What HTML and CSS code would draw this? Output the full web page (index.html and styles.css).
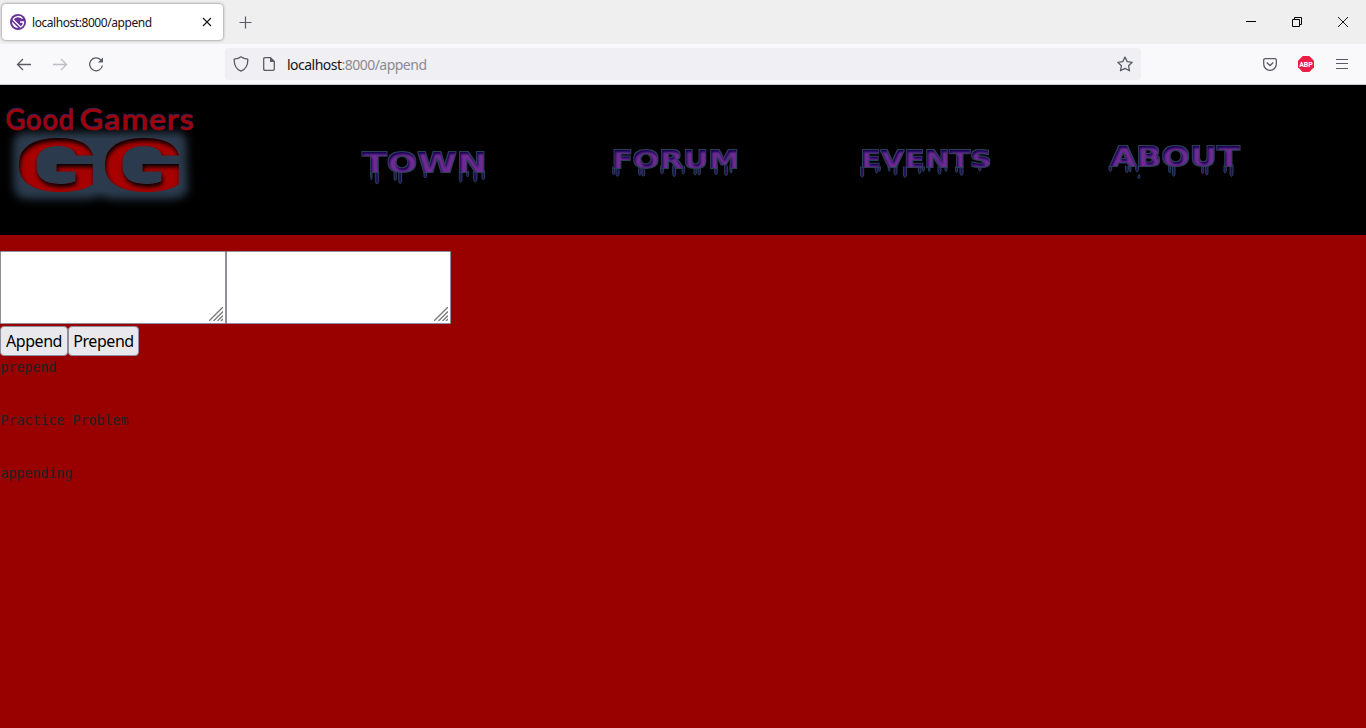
FILE: index.html
```html
<!DOCTYPE html>
<html lang="en">
<head>
<meta charset="utf-8">
<title>localhost:8000/append</title>
<link rel="stylesheet" href="styles.css">
</head>
<body>
<div class="tabs">
  <div class="tab">
    <svg width="16" height="16" viewBox="0 0 16 16"><circle cx="8" cy="8" r="8" fill="#639"/><path d="M2 7.5 8.5 14A6 6 0 0 1 2 7.5Z" fill="#fff"/><path d="M3 5.5 10.6 13A5.6 5.6 0 0 0 13.5 8H10M3 5.5A5.7 5.7 0 0 1 12.5 4.7" fill="none" stroke="#fff" stroke-width="1.3"/></svg>
    <span class="tab-title">localhost:8000/append</span>
    <svg class="tab-close" width="10" height="10" viewBox="0 0 10 10"><path d="m1 1 8 8M9 1 1 9" stroke="#15141a" stroke-width="1.1"/></svg>
  </div>
  <svg class="new-tab" width="13" height="13" viewBox="0 0 13 13"><path d="M6.5.5v12M.5 6.5h12" stroke="#5b5b66" stroke-width="1.2"/></svg>
  <div class="window-buttons">
    <svg width="10" height="11" viewBox="0 0 10 11"><path d="M0 4.5h10" stroke="#000"/></svg>
    <svg width="10" height="10" viewBox="0 0 10 10"><path d="M.5 2.500h7v7h-7zM2.500 2.500v-2h7v7h-2" fill="none" stroke="#000"/></svg>
    <svg width="10" height="10" viewBox="0 0 10 10"><path d="m0 0 10 10M10 0 0 10" stroke="#000" stroke-width=".9"/></svg>
  </div>
</div>
<div class="toolbar">
  <div class="history">
    <svg width="16" height="16" viewBox="0 0 16 16"><path d="M15 8.5H1.5M7 3 1.5 8.5 7 14" fill="none" stroke="#5b5b66" stroke-width="1.3"/></svg>
    <svg width="16" height="16" viewBox="0 0 16 16"><path d="M1 8.5h13.5M9 3l5.500 5.500L9 14" fill="none" stroke="#bdbdc3" stroke-width="1.3"/></svg>
    <svg width="16" height="16" viewBox="0 0 16 16"><path d="M12.800 4A6.400 6.400 0 1 0 14.400 9.500" fill="none" stroke="#5b5b66" stroke-width="1.300"/><path d="M15 1.500V6.600H9.900Z" fill="#5b5b66"/></svg>
  </div>
  <div class="address">
    <svg width="16" height="16" viewBox="0 0 16 16"><path d="M8 .8C6.200 2.300 3.500 3 1.200 3.200 1 9 3 13 8 15.200 13 13 15 9 14.800 3.200 12.500 3 9.800 2.300 8 .8Z" fill="none" stroke="#5b5b66" stroke-width="1.300" stroke-linejoin="round"/></svg>
    <svg class="page-icon" width="12" height="14" viewBox="0 0 12 14"><path d="M2 .7H7.500L11.300 4.500V12Q11.300 13.300 10 13.300H2Q.7 13.300.7 12V2Q.7.7 2 .7Z" fill="none" stroke="#5b5b66" stroke-width="1.300"/><path d="M7 .5V5H11.500Z" fill="#5b5b66"/></svg>
    <span class="url"><b>localhost</b>:8000/append</span>
    <svg class="star" width="16" height="16" viewBox="0 0 16 16"><path d="m8 1 2.200 4.600 5 .7-3.600 3.500.9 5L8 12.400l-4.500 2.400.9-5L.8 6.300l5-.7Z" fill="none" stroke="#5b5b66" stroke-width="1.300" stroke-linejoin="round"/></svg>
  </div>
  <div class="tools">
    <svg width="14" height="13" viewBox="0 0 14 13"><path d="M2.200.7H11.800Q13.300.7 13.300 2.200V6A6.300 6.300 0 0 1 .7 6V2.200Q.7.7 2.200.7Z" fill="none" stroke="#5b5b66" stroke-width="1.300"/><path d="m3.800 4.600 3.200 3 3.200-3" fill="none" stroke="#5b5b66" stroke-width="1.400"/></svg>
    <svg width="16" height="16" viewBox="0 0 16 16"><path d="M4.700 0h6.600L16 4.700v6.600L11.300 16H4.700L0 11.300V4.700Z" fill="#ed1e45"/><text class="abp" x="1.200" y="10.900" textLength="13.600" lengthAdjust="spacingAndGlyphs">ABP</text></svg>
    <svg width="12" height="12" viewBox="0 0 12 12"><path d="M0 1.500h12M0 5.500h12M0 10.500h12" stroke="#5b5b66" stroke-width="1.200"/></svg>
  </div>
</div>
<header class="site-header">
  <svg class="logo" width="210" height="120" viewBox="0 0 630 360">
    <defs>
      <filter id="haze" x="-20%" y="-30%" width="140%" height="160%"><feGaussianBlur stdDeviation="12"/></filter>
      <filter id="carved" x="-10%" y="-10%" width="120%" height="120%">
        <feComponentTransfer in="SourceAlpha" result="inv"><feFuncA type="linear" slope="-1" intercept="1"/></feComponentTransfer>
        <feGaussianBlur in="inv" stdDeviation="6"/><feOffset dx="4" dy="8"/>
        <feComposite in2="SourceAlpha" operator="in" result="shade"/>
        <feMerge><feMergeNode in="SourceGraphic"/><feMergeNode in="shade"/></feMerge>
      </filter>
      <filter id="bevel" x="-5%" y="-10%" width="110%" height="120%">
        <feComponentTransfer in="SourceAlpha" result="inv"><feFuncA type="linear" slope="-1" intercept="1"/></feComponentTransfer>
        <feGaussianBlur in="inv" stdDeviation="3.500"/><feOffset dx="2" dy="6" result="soft"/>
        <feFlood flood-color="#12004c"/><feComposite in2="soft" operator="in"/>
        <feComposite in2="SourceAlpha" operator="in" result="shade"/>
        <feMorphology in="SourceAlpha" operator="dilate" radius="2.500" result="wide"/>
        <feFlood flood-color="#284056"/><feComposite in2="wide" operator="in" result="edge"/>
        <feMerge><feMergeNode in="edge"/><feMergeNode in="SourceGraphic"/><feMergeNode in="shade"/></feMerge>
      </filter>
    </defs>
    <path d="M75 112H540Q566 120 560 180L564 286Q550 314 510 312H330L300 302 270 312H75Q38 304 40 260V150Q42 114 75 112Z" fill="#2b3b4d" filter="url(#haze)"/>
    <path d="M90 130H530V290H90Q62 280 62 250V165Q65 135 90 130Z" fill="#2b3b4d"/>
    <g class="gg" filter="url(#carved)">
      <text x="40" y="288" textLength="260" lengthAdjust="spacingAndGlyphs">G</text>
      <text x="298" y="288" textLength="260" lengthAdjust="spacingAndGlyphs">G</text>
    </g>
    <g class="brand">
      <text x="18" y="104" textLength="208" lengthAdjust="spacingAndGlyphs">Good</text>
      <text x="241" y="104" textLength="345" lengthAdjust="spacingAndGlyphs">Gamers</text>
    </g>
  </svg>
  <nav class="menu">
    <svg width="150" height="60" viewBox="0 0 450 180">
      <path class="drip" d="M62 110v18q2 12 4 0v-18M76 110v30q5 14 10 0v-30M132 108v24q4 10 7 0v-22M146 108v32q5 12 9 0v-28M222 105v20q4 8 8 0v-20M328 108v28q4 12 8 0v-30M350 108v14q3 8 6 0v-14M370 108v26q6 14 11 0v-28M396 108v22q4 9 8 0v-24"/>
      <text class="slime" x="37" y="110" textLength="373" lengthAdjust="spacingAndGlyphs">TOWN</text>
    </svg>
    <svg width="150" height="60" viewBox="0 0 450 180">
      <path class="drip" d="M38 95v20q3 8 6 0v-20M48 95v24q5 10 9 0v-24M116 92v26q4 8 7 0v-20M126 92v28q4 8 8 0v-26M182 92v20q4 10 8 0v-20M218 92v26q5 14 9 0v-26M246 92v20q4 10 8 0v-20M282 92v24q4 9 7 0v-22M294 92v24q4 9 7 0v-24M344 92v22q4 11 8 0v-22M374 92v24q5 12 9 0v-24M390 92v18q3 9 6 0v-18"/>
      <text class="slime" x="35" y="98" textLength="382" lengthAdjust="spacingAndGlyphs">FORUM</text>
    </svg>
    <svg width="150" height="60" viewBox="0 0 450 180">
      <path class="drip" d="M32 94v26q5 14 9 0v-26M76 94v15q4 11 8 0v-15M86 94v10q3 10 5 0v-10M115 94v10q3 10 5 0v-10M132 94v20q5 12 9 0v-20M160 94v26q5 14 10 0v-26M205 94v17q4 10 8 0v-17M218 94v12q3 8 5 0v-12M235 94v12q3 8 5 0v-12M264 94v18q5 12 9 0v-18M285 94v12q3 8 6 0v-12M317 94v14q3 9 6 0v-14M330 94v22q4 11 9 0v-22M386 94v8q3 12 7 0v-8"/>
      <text class="slime" x="31" y="97" textLength="394" lengthAdjust="spacingAndGlyphs">EVENTS</text>
    </svg>
    <svg width="150" height="60" viewBox="0 0 450 180">
      <path class="drip" d="M27 92v12q4 11 8 0v-14M76 92v14q5 14 9 0v-14M88 92v15q3 9 5 0v-15M107 92v12q5 14 9 0v-12M114 124q-3 3 1 6 7 0 5-6l-3-5ZM206 92v18q3 8 6 0v-18M217 92v26q5 12 8 0v-28M305 92v20q3 9 6 0v-20M317 92v22q3 12 7 0v-22M372 90v20q4 9 7 0v-20M390 88v30q4 14 9 0v-30"/>
      <text class="slime tall" x="31" y="94" textLength="388" lengthAdjust="spacingAndGlyphs">ABOUT</text>
    </svg>
  </nav>
</header>
<main>
  <div class="fields">
    <div class="field"><textarea></textarea><svg class="grip" width="14" height="14" viewBox="0 0 14 14"><path d="M0 14 14 0M4.500 14 14 4.500M8.500 14 14 8.500M12 14l2-2" stroke="#777" stroke-width="1.300"/></svg></div>
    <div class="field second"><textarea></textarea><svg class="grip" width="14" height="14" viewBox="0 0 14 14"><path d="M0 14 14 0M4.500 14 14 4.500M8.500 14 14 8.500M12 14l2-2" stroke="#777" stroke-width="1.300"/></svg></div>
  </div>
  <div class="actions"><button class="append">Append</button><button class="prepend">Prepend</button></div>
  <pre>prepend</pre>
  <pre>Practice Problem</pre>
  <pre>appending</pre>
</main>
</body>
</html>
```
FILE: styles.css
```css
* { box-sizing: border-box; }
body { margin: 0; height: 728px; overflow: hidden; background: #900; font-family: "Noto Sans", sans-serif; }
svg { display: block; flex: none; }
filter, filter * { color-interpolation-filters: sRGB; }
.tabs { height: 44px; background: #efefef; display: flex; align-items: center; padding: 0 18px 0 2px; }
.tab { width: 221px; height: 36px; border-radius: 4px; background: #fff; box-shadow: 0 0 3px rgba(0,0,0,.55); display: flex; align-items: center; padding: 0 11px 0 8px; }
.tab-title { margin-left: 6px; font-size: 12px; letter-spacing: -.44px; color: #15141a; white-space: nowrap; }
.tab-close { margin-left: auto; }
.new-tab { margin-left: 16px; }
.window-buttons { margin-left: auto; display: flex; align-items: center; gap: 36px; }
.toolbar { height: 41px; background: #f9f9fb; border-bottom: 1px solid #ccccd0; display: flex; align-items: center; padding: 0 18px 0 16px; }
.history { display: flex; gap: 20px; }
.address { width: 916px; height: 32px; margin-left: 121px; background: #f0f0f4; border-radius: 4px; display: flex; align-items: center; padding: 0 8px; }
.page-icon { margin-left: 14px; }
.url { margin-left: 12px; font-size: 14px; letter-spacing: -.52px; color: #8b8b92; white-space: nowrap; }
.url b { font-weight: 400; color: #15141a; }
.star { margin-left: auto; }
.tools { margin-left: auto; display: flex; align-items: center; gap: 22px; }
.tools svg:first-child { margin-right: -1px; }
.abp { font: bold 8px Roboto, sans-serif; fill: #fff; }
.site-header { height: 150px; background: #000; display: flex; align-items: flex-start; padding-top: 10px; }
.menu { margin: 40px 0 0 140px; display: flex; gap: 100px; }
.gg { font: 500 217px Roboto, sans-serif; fill: #a80000; stroke: #a80000; stroke-width: 3; }
.brand { font: 400 84px "Lato", sans-serif; fill: #a00008; stroke: #a00008; stroke-width: 2; letter-spacing: 3px; filter: drop-shadow(-1px -2px 0 #43358c); }
.slime { font: bold 80px "DejaVu Sans", sans-serif; fill: #6e2c92; filter: url(#bevel); }
.menu svg:nth-child(2) .slime { font-size: 72px; }
.menu svg:nth-child(3) .slime { font-size: 69px; }
.slime.tall { font-size: 78px; }
.drip { fill: #24105a; stroke: #284056; stroke-width: 3; }
.fields { display: flex; padding-top: 16px; }
.field { position: relative; width: 226px; height: 73px; }
.second { width: 225px; }
textarea { display: block; width: 100%; height: 73px; margin: 0; border: 1px solid #8f8f9d; border-radius: 1px; resize: none; background: #fff; }
.grip { position: absolute; right: 3px; bottom: 3px; }
.actions { display: flex; margin-top: 2px; margin-bottom: 2px; }
button { height: 30px; padding: 0; border: 1px solid #8f8f9d; border-radius: 4px; background: #e9e9ed; color: #000; font: 16px "Noto Sans", sans-serif; letter-spacing: -.45px; }
.append { width: 68px; }
.prepend { width: 71px; }
pre { margin: 0 0 33px; height: 20px; padding-left: .5px; font: 13.300px/20px "DejaVu Sans Mono", monospace; color: #232129; }
```
